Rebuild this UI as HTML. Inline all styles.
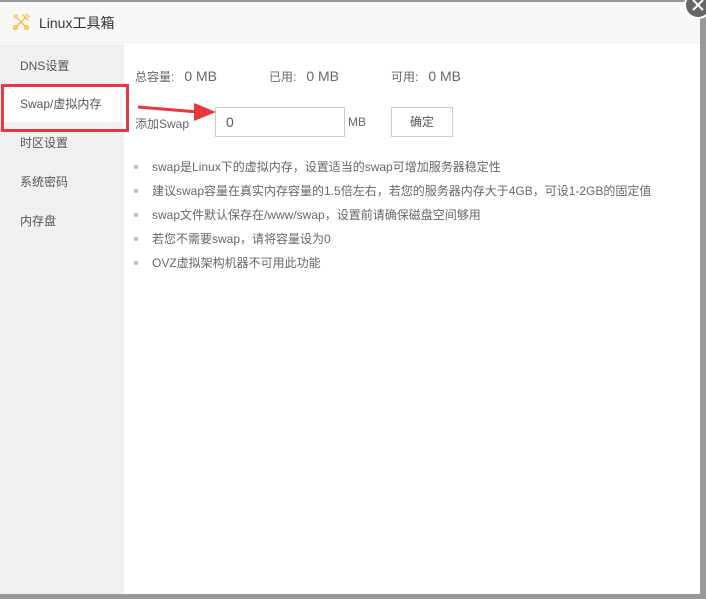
<!DOCTYPE html>
<html><head><meta charset="utf-8"><style>
*{margin:0;padding:0;box-sizing:border-box}
body{width:706px;height:599px;background:#999;position:relative;overflow:hidden;font-family:"Liberation Sans","Noto Sans CJK SC",sans-serif;color:#555}
.dlg{position:absolute;left:0;top:2px;width:700px;height:592px;background:#fff}
.hd{position:absolute;left:0;top:0;width:700px;height:41px;background:#f8f8f8;border-bottom:1px solid #eee}
.hd span{position:absolute;left:39px;top:11px;font-size:14px;color:#333}
.side{position:absolute;left:0;top:42px;width:124px;height:550px;background:#f0f0f0}
.it{position:absolute;left:20px;font-size:12px;color:#555}
.row{position:absolute;top:66px;font-size:12px;color:#666;white-space:nowrap}
.row b{font-weight:normal;font-size:14px;margin-left:10px}
.a{position:absolute;font-size:12px;color:#666}
.li{position:absolute;left:152px;font-size:12px;color:#666;white-space:nowrap}
.dot{position:absolute;left:134px;width:4px;height:4px;border-radius:2px;background:#bbb}
</style></head><body>
<div class="dlg">
<div class="hd"><svg style="position:absolute;left:11px;top:10px" width="20" height="20" viewBox="0 0 20 20" fill="none" stroke="#f0c040" stroke-width="1.3" stroke-linecap="round"><path d="M4 16L14 6M12 3l5 5M15 2l3 3M3 3l5 5M3 6l3-3M9 9l7 7"/><circle cx="15.5" cy="15.5" r="2"/><circle cx="4.5" cy="15.5" r="2"/></svg><span>Linux工具箱</span></div>
<div class="side"></div>
<div style="position:absolute;left:0;top:82px;width:124px;height:38px;background:#fff"></div>
<div class="it" style="top:55px">DNS设置</div>
<div class="it" style="top:93px">Swap/虚拟内存</div>
<div class="it" style="top:132px">时区设置</div>
<div class="it" style="top:171px">系统密码</div>
<div class="it" style="top:210px">内存盘</div>
<div style="position:absolute;left:1px;top:82px;width:128px;height:48px;border:3px solid #e8383d"></div>
<div class="row" style="left:135px">总容量:<b>0 MB</b></div>
<div class="row" style="left:269px">已用:<b>0 MB</b></div>
<div class="row" style="left:391px">可用:<b>0 MB</b></div>
<div class="a" style="left:135px;top:113px">添加Swap</div>
<div style="position:absolute;left:215px;top:105px;width:130px;height:30px;border:1px solid #ccc;font-size:14px;color:#555;padding:6px 10px">0</div>
<div class="a" style="left:348px;top:113px">MB</div>
<div style="position:absolute;left:391px;top:105px;width:62px;height:30px;border:1px solid #ccc;font-size:12px;color:#555;text-align:center;line-height:28px">确定</div>
<svg style="position:absolute;left:136px;top:98px" width="82" height="24"><path d="M2 7L62 12" stroke="#e8383d" stroke-width="3"/><path d="M58 3L80 12L58 21Z" fill="#e8383d"/></svg>
<div class="dot" style="top:163px"></div><div class="li" style="top:156px">swap是Linux下的虚拟内存，设置适当的swap可增加服务器稳定性</div>
<div class="dot" style="top:187px"></div><div class="li" style="top:180px">建议swap容量在真实内存容量的1.5倍左右，若您的服务器内存大于4GB，可设1-2GB的固定值</div>
<div class="dot" style="top:211px"></div><div class="li" style="top:204px">swap文件默认保存在/www/swap，设置前请确保磁盘空间够用</div>
<div class="dot" style="top:235px"></div><div class="li" style="top:228px">若您不需要swap，请将容量设为0</div>
<div class="dot" style="top:259px"></div><div class="li" style="top:252px">OVZ虚拟架构机器不可用此功能</div>
</div>
<div style="position:absolute;left:684px;top:-9px;width:28px;height:28px;border-radius:50%;background:#666;border:2px solid #fff"></div>
<svg style="position:absolute;left:690px;top:-3px" width="16" height="16"><path d="M3 3L13 13M13 3L3 13" stroke="#fff" stroke-width="2"/></svg>
</body></html>
